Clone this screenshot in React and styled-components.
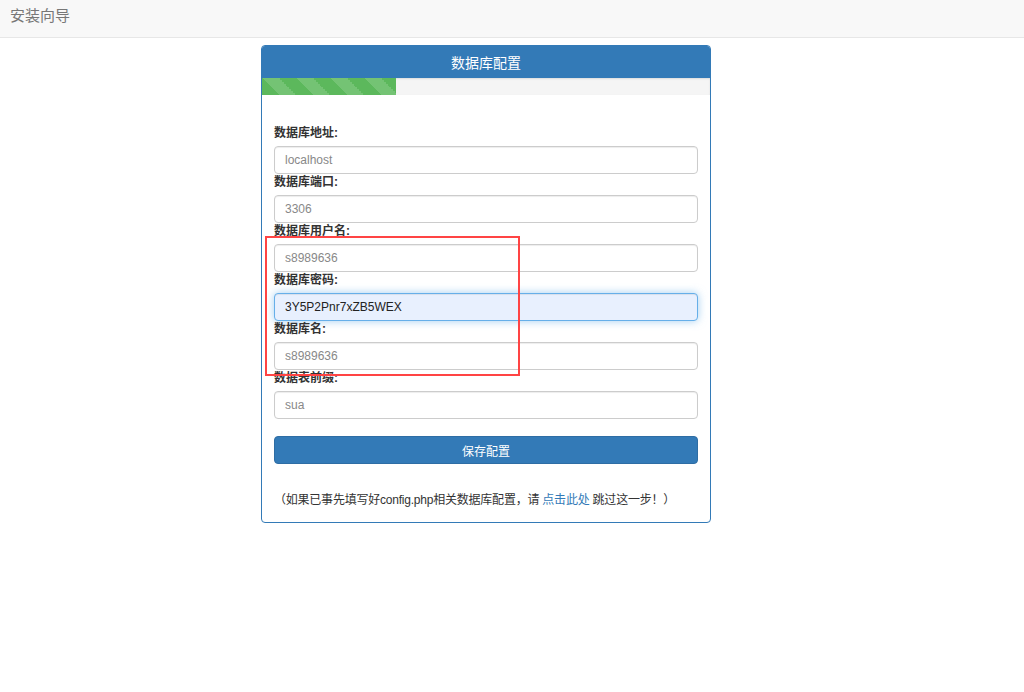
import React from "react";
import styled, { createGlobalStyle } from "styled-components";

const Global = createGlobalStyle`
  html, body { margin: 0; padding: 0; background: #fff; }
  body {
    font-family: "Liberation Sans", "Noto Sans CJK SC", sans-serif;
    font-size: 12px;
    color: #333;
  }
  * { box-sizing: border-box; }
`;

const Page = styled.div`
  position: relative;
  min-height: 692px;
`;

const Navbar = styled.div`
  height: 38px;
  background: #f8f8f8;
  border-bottom: 1px solid #e7e7e7;
  display: flex;
  align-items: flex-start;
  padding: 6px 0 0 10px;
`;

const Brand = styled.span`
  font-size: 15px;
  line-height: 20px;
  color: #777;
`;

const Panel = styled.div`
  width: 450px;
  margin: 7px 0 0 261px;
  border: 1px solid #337ab7;
  border-radius: 4px;
  overflow: hidden;
`;

const PanelHeading = styled.div`
  height: 32px;
  background: #337ab7;
  color: #fff;
  font-size: 14px;
  display: flex;
  align-items: center;
  justify-content: center;
`;

const Progress = styled.div`
  height: 17px;
  background: #f5f5f5;
  box-shadow: inset 0 1px 2px rgba(0, 0, 0, 0.1);
`;

const Bar = styled.div`
  height: 100%;
  background-color: #5cb85c;
  background-image: linear-gradient(
    45deg,
    rgba(255, 255, 255, 0.15) 25%,
    transparent 25%,
    transparent 50%,
    rgba(255, 255, 255, 0.15) 50%,
    rgba(255, 255, 255, 0.15) 75%,
    transparent 75%,
    transparent
  );
  background-size: 34px 34px;
`;

const Form = styled.div`
  padding: 30px 12px 0 12px;
  display: flex;
  flex-direction: column;
`;

const Label = styled.label`
  font-weight: bold;
  font-size: 12px;
  line-height: 17px;
  margin-bottom: 4px;
  color: #333;
`;

const Input = styled.div`
  height: 28px;
  border: 1px solid ${(p) => (p.$focus ? "#66afe9" : "#ccc")};
  border-radius: 4px;
  background: ${(p) => (p.$focus ? "#e8f0fe" : "#fff")};
  box-shadow: ${(p) =>
    p.$focus
      ? "inset 0 1px 1px rgba(0,0,0,.075), 0 0 8px rgba(102,175,233,.6)"
      : "inset 0 1px 1px rgba(0,0,0,.075)"};
  padding: 0 10px;
  display: flex;
  align-items: center;
  font-size: 12px;
  color: ${(p) => (p.$focus ? "#222" : "#888")};
`;

const Button = styled.button`
  margin-top: 17px;
  height: 28px;
  border: 1px solid #2e6da4;
  border-radius: 4px;
  background: #337ab7;
  color: #fff;
  font-family: inherit;
  font-size: 12px;
  padding: 0;
`;

const Note = styled.p`
  margin: 28px 0 13px;
  font-size: 12px;
  line-height: 17px;
  letter-spacing: -0.22px;
  color: #333;
`;

const Link = styled.a`
  color: #337ab7;
  text-decoration: none;
`;

const Annotation = styled.div`
  position: absolute;
  left: 265px;
  top: 236px;
  width: 255px;
  height: 140px;
  border: 2px solid #f44;
  pointer-events: none;
`;

const fields = [
  { label: "数据库地址:", value: "localhost" },
  { label: "数据库端口:", value: "3306" },
  { label: "数据库用户名:", value: "s8989636" },
  { label: "数据库密码:", value: "3Y5P2Pnr7xZB5WEX", focus: true },
  { label: "数据库名:", value: "s8989636" },
  { label: "数据表前缀:", value: "sua" },
];

export default function App() {
  return (
    <Page>
      <Global />
      <Navbar>
        <Brand>安装向导</Brand>
      </Navbar>
      <Panel>
        <PanelHeading>数据库配置</PanelHeading>
        <Progress>
          <Bar style={{ width: "30%" }} />
        </Progress>
        <Form>
          {fields.map((f) => (
            <React.Fragment key={f.label}>
              <Label>{f.label}</Label>
              <Input $focus={f.focus}>{f.value}</Input>
            </React.Fragment>
          ))}
          <Button>保存配置</Button>
          <Note>
            （如果已事先填写好config.php相关数据库配置，请 <Link href="#">点击此处</Link> 跳过这一步！）
          </Note>
        </Form>
      </Panel>
      <Annotation />
    </Page>
  );
}
